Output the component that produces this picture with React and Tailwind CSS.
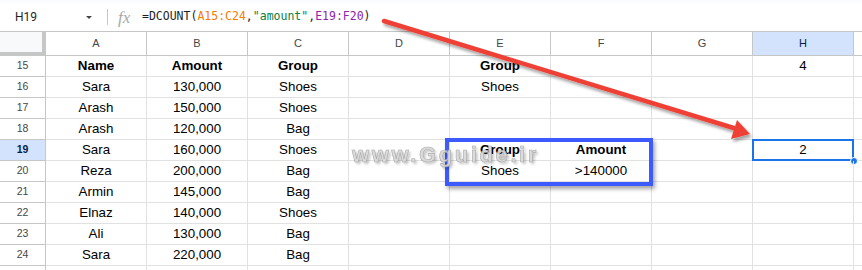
import React from "react";

const COLS = ["A", "B", "C", "D", "E", "F", "G", "H"];

// bold cell helper
const b = (t) => ({ t, bold: true });

const ROWS = [
  [15, [b("Name"), b("Amount"), b("Group"), "", b("Group"), "", "", "4"]],
  [16, ["Sara", "130,000", "Shoes", "", "Shoes", "", "", ""]],
  [17, ["Arash", "150,000", "Shoes", "", "", "", "", ""]],
  [18, ["Arash", "120,000", "Bag", "", "", "", "", ""]],
  [19, ["Sara", "160,000", "Shoes", "", b("Group"), b("Amount"), "", "2"]],
  [20, ["Reza", "200,000", "Bag", "", "Shoes", ">140000", "", ""]],
  [21, ["Armin", "145,000", "Bag", "", "", "", "", ""]],
  [22, ["Elnaz", "140,000", "Shoes", "", "", "", "", ""]],
  [23, ["Ali", "130,000", "Bag", "", "", "", "", ""]],
  [24, ["Sara", "220,000", "Bag", "", "", "", "", ""]],
  ["", ["", "", "", "", "", "", "", ""]], // row 25, only its top edge shows
];

function FormulaBar() {
  return (
    <div className="h-[32px] flex flex-col border-b border-[#c4c7c5] bg-white">
      <div className="h-[3px] bg-[#f9fbfd]" />
      <div className="flex-1 flex items-center">
        <span className="ml-[15px] w-[60px] text-[12px] text-[#1f1f1f] font-['Roboto']">H19</span>
        <span className="ml-[11px] w-0 h-0 border-l-[3px] border-r-[3px] border-t-[3px] border-l-transparent border-r-transparent border-t-[#444746]" />
        <span className="ml-[15px] w-px h-[16px] bg-[#c4c7c5]" />
        <span className="ml-[10px] w-[20px] text-[17px] leading-none italic text-[#a8a8a8] font-['Liberation_Serif']">fx</span>
        <span className="ml-[4px] text-[11.5px] text-[#1f1f1f] font-['DejaVu_Sans_Mono'] whitespace-pre">
          =DCOUNT(
          <span className="text-[#f57c00]">A15:C24</span>,
          <span className="text-[#0b8043]">"amount"</span>,
          <span className="text-[#8e24aa]">E19:F20</span>)
        </span>
      </div>
    </div>
  );
}

function HeaderRow() {
  return (
    <div className="flex h-[24px]">
      <div className="w-[46px] shrink-0 bg-[#f8f9fa] border-r-4 border-b-4 border-[#c4c7c5]" />
      {COLS.map((c) => (
        <div
          key={c}
          className={
            "w-[101px] shrink-0 flex items-center justify-center border-r border-b border-[#c4c7c5] text-[11px] font-['Liberation_Sans'] " +
            (c === "H" ? "bg-[#d3e3fd] text-[#041e49]" : "bg-white text-[#444746]")
          }
        >
          {c}
        </div>
      ))}
      <div className="flex-1 border-b border-[#c4c7c5]" />
    </div>
  );
}

function Row({ num, cells }) {
  const sel = num === 19;
  return (
    <div className="flex h-[21px]">
      <div
        className={
          "w-[46px] shrink-0 flex items-center justify-center border-r border-b border-[#c4c7c5] text-[10.5px] font-['Liberation_Sans'] " +
          (sel ? "bg-[#d3e3fd] text-[#041e49] font-bold" : "bg-white text-[#444746]")
        }
      >
        {num}
      </div>
      {cells.map((c, i) => {
        const cell = typeof c === "string" ? { t: c } : c;
        return (
          <div
            key={i}
            className={
              "relative w-[101px] shrink-0 flex items-center justify-center border-r border-b border-[#e1e1e1] text-[13.33px] text-black font-['Liberation_Sans'] " +
              (cell.bold ? "font-bold" : "")
            }
          >
            {cell.t}
            {sel && i === 7 && (
              <>
                <div className="absolute -left-px -top-px -right-px -bottom-px border-2 border-[#1a73e8]" />
                <div className="absolute -right-[5px] -bottom-[5px] w-[8px] h-[8px] rounded-full bg-[#1a73e8] border border-white" />
              </>
            )}
          </div>
        );
      })}
      <div className="flex-1 border-b border-[#e1e1e1]" />
    </div>
  );
}

export default function App() {
  return (
    <div className="relative w-[862px] h-[270px] overflow-hidden bg-white">
      <FormulaBar />
      <HeaderRow />
      {ROWS.map(([n, cells], i) => (
        <Row key={i} num={n} cells={cells} />
      ))}

      {/* criteria box annotation */}
      <div className="absolute left-[445px] top-[138px] w-[208px] h-[48px] border-4 border-[#3d5afe] shadow-[2px_3px_4px_rgba(0,0,0,0.35)]" />

      {/* watermark */}
      <div className="absolute left-[352px] top-[138px] text-[22px] font-bold tracking-[2.6px] font-['Liberation_Sans'] text-[#d8d8d8] [-webkit-text-stroke:0.6px_#a0a0a0] [text-shadow:2px_2px_3px_rgba(0,0,0,0.3)] opacity-90">
        www.Gguide.ir
      </div>

      {/* red arrow */}
      <svg className="absolute left-0 top-0 pointer-events-none" width="862" height="270">
        <defs>
          <filter id="sh" x="-10%" y="-10%" width="120%" height="140%">
            <feDropShadow dx="2" dy="3" stdDeviation="1.5" floodColor="#000" floodOpacity="0.35" />
          </filter>
        </defs>
        <g filter="url(#sh)">
          <line x1="384" y1="21" x2="737" y2="129" stroke="#ef4136" strokeWidth="4.5" strokeLinecap="round" />
          <polygon points="750,134 731,139 737,120" fill="#ef4136" />
        </g>
      </svg>
    </div>
  );
}
